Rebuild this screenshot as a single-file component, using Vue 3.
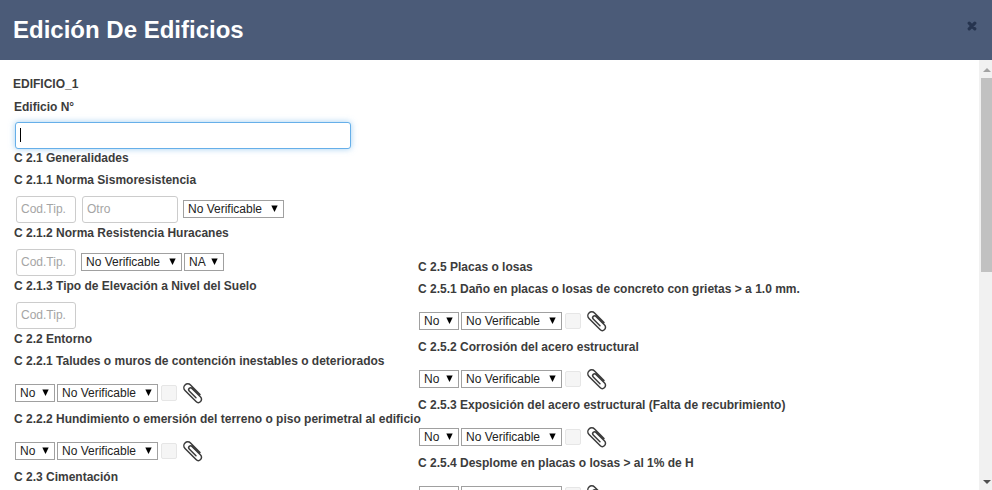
<script setup>
import { ref } from 'vue'

const number = ref('')

const check = (id, title) => ({
  id,
  title,
  tall: true,
  fields: [
    { kind: 'select', value: 'No', size: 'short' },
    { kind: 'select', value: 'No Verificable', size: 'long' },
    { kind: 'attachment' },
  ],
})

const code = { kind: 'text', placeholder: 'Cod.Tip.', size: 'code' }
const verifiable = { kind: 'select', value: 'No Verificable', size: 'long' }

const columns = [
  {
    name: 'left',
    items: [
      { id: 'c21', title: 'C 2.1 Generalidades' },
      {
        id: 'c211',
        title: 'C 2.1.1 Norma Sismoresistencia',
        fields: [code, { kind: 'text', placeholder: 'Otro', size: 'other' }, verifiable],
      },
      {
        id: 'c212',
        title: 'C 2.1.2 Norma Resistencia Huracanes',
        fields: [code, verifiable, { kind: 'select', value: 'NA', size: 'short' }],
      },
      { id: 'c213', title: 'C 2.1.3 Tipo de Elevación a Nivel del Suelo', fields: [code] },
      { id: 'c22', title: 'C 2.2 Entorno' },
      check('c221', 'C 2.2.1 Taludes o muros de contención inestables o deteriorados'),
      check('c222', 'C 2.2.2 Hundimiento o emersión del terreno o piso perimetral al edificio'),
      { id: 'c23', title: 'C 2.3 Cimentación' },
    ],
  },
  {
    name: 'right',
    items: [
      { id: 'c25', title: 'C 2.5 Placas o losas' },
      check('c251', 'C 2.5.1 Daño en placas o losas de concreto con grietas > a 1.0 mm.'),
      check('c252', 'C 2.5.2 Corrosión del acero estructural'),
      check('c253', 'C 2.5.3 Exposición del acero estructural (Falta de recubrimiento)'),
      check('c254', 'C 2.5.4 Desplome en placas o losas > al 1% de H'),
    ],
  },
]
</script>

<template>
  <div class="dialog">
    <header class="header">
      <h1>Edición De Edificios</h1>
      <button class="close" type="button" aria-label="Cerrar">
        <svg viewBox="0 0 10 10" width="10" height="10">
          <path d="M2.2 2.2 7.8 7.8M7.8 2.2 2.2 7.8" stroke="currentColor" stroke-width="3.2" stroke-linecap="round" />
        </svg>
      </button>
    </header>

    <div class="body">
      <form class="form" @submit.prevent>
        <p class="name">EDIFICIO_1</p>
        <div class="columns">
          <div v-for="column in columns" :key="column.name" class="column" :class="column.name">
            <template v-if="column.name === 'left'">
              <label class="title" for="number">Edificio N°</label>
              <div class="number">
                <input id="number" v-model="number" class="text" type="text" />
                <span class="caret"></span>
              </div>
            </template>

            <div v-for="item in column.items" :key="item.id">
              <component :is="item.fields ? 'label' : 'h2'" class="title" :for="item.fields ? item.id + '-0' : null">
                {{ item.title }}
              </component>
              <div v-if="item.fields" class="fields" :class="{ tall: item.tall }">
                <template v-for="(field, i) in item.fields" :key="i">
                  <input
                    v-if="field.kind === 'text'"
                    :id="item.id + '-' + i"
                    class="text"
                    :class="field.size"
                    type="text"
                    :placeholder="field.placeholder"
                  />
                  <span v-else-if="field.kind === 'select'" class="select" :class="field.size">
                    <select :id="item.id + '-' + i" :aria-label="item.title">
                      <option>{{ field.value }}</option>
                    </select>
                    <svg class="arrow" viewBox="0 0 7 7" width="7" height="7"><path d="M.3.5h6.4L3.5 7z" /></svg>
                  </span>
                  <template v-else>
                    <input class="box" type="checkbox" disabled :aria-label="item.title" />
                    <button class="attach" type="button" aria-label="Adjuntar">
                      <svg viewBox="-10 -10 20 20" width="20" height="20">
                        <path
                          transform="rotate(-45)"
                          d="M3.9 6V-7.4A3.9 3.9 0 0 0-3.9-7.4V8.2A3.2 3.2 0 0 0 2.5 8.2V-4A1.9 1.9 0 0 0-1.3-4V5.5"
                        />
                      </svg>
                    </button>
                  </template>
                </template>
              </div>
            </div>
          </div>
        </div>
      </form>

      <div class="scrollbar" aria-hidden="true">
        <svg class="up" viewBox="0 0 8 4" width="8" height="4"><path d="M4 0 8 4H0z" /></svg>
        <div class="track"><div class="thumb"></div></div>
        <svg class="down" viewBox="0 0 8 4" width="8" height="4"><path d="M0 0h8L4 4z" /></svg>
      </div>
    </div>
  </div>
</template>

<style>
body {
  margin: 0;
}
</style>

<style scoped>
.dialog {
  display: flex;
  flex-direction: column;
  height: 100vh;
  overflow: hidden;
  background: #fff;
  color: #3c3c3c;
  font: 12px "Liberation Sans", Arial, sans-serif;
}

.header {
  display: flex;
  flex: none;
  align-items: center;
  justify-content: space-between;
  height: 60px;
  padding: 0 15px 0 13px;
  box-sizing: border-box;
  background: #4b5b78;
}

h1 {
  margin: 0;
  color: #fff;
  font-size: 24px;
  line-height: 28px;
}

button {
  display: flex;
  padding: 0;
  border: 0;
  background: none;
}

.close {
  margin-bottom: 8px;
  color: #26344f;
}

.body {
  display: flex;
  flex: 1;
  min-height: 0;
}

.form {
  flex: 1;
  min-width: 0;
  padding: 13px 0 0 13px;
  overflow: hidden;
}

.name {
  margin: 0;
  font-weight: bold;
  line-height: 22px;
}

.columns {
  display: flex;
  gap: 2px;
  padding: 1px 0 0 1px;
}

.column {
  flex: none;
}

.left {
  width: 402px;
}

.right {
  padding-top: 160px;
}

.title {
  display: block;
  margin: 0;
  font-size: 12px;
  font-weight: bold;
  line-height: 22px;
  white-space: nowrap;
}

.number {
  position: relative;
  width: 336px;
  margin: 4px 0 -2px 1px;
}

.text {
  display: block;
  height: 27px;
  padding: 0 4px;
  box-sizing: border-box;
  border: 1px solid #ccc;
  border-radius: 3px;
  background: #fff;
  color: #333;
  font: inherit;
}

.text::placeholder {
  color: #a5a5a5;
}

.number .text {
  width: 100%;
  border-color: #66afe9;
  outline: 0;
  box-shadow: 0 0 6px rgba(102, 175, 233, 0.6);
}

.caret {
  position: absolute;
  top: 6px;
  left: 5px;
  width: 1px;
  height: 14px;
  background: #000;
}

.fields {
  display: flex;
  align-items: center;
  height: 26px;
  padding: 5px 0 0 2px;
}

.fields.tall {
  height: 30px;
  padding: 6px 0 0 1px;
}

.code {
  width: 60px;
  margin-right: 5px;
}

.other {
  width: 96px;
  margin: 0 5px 0 1px;
}

.select {
  position: relative;
  height: 18px;
  margin-right: 2px;
}

.select select {
  display: block;
  width: 100%;
  height: 100%;
  margin: 0;
  padding: 0 4px;
  box-sizing: border-box;
  border: 1px solid #a0a0a0;
  border-radius: 0;
  appearance: none;
  background: #fff;
  color: #222;
  font: inherit;
}

.short {
  width: 40px;
}

.long {
  width: 101px;
}

.arrow {
  position: absolute;
  top: 5px;
  right: 6px;
  fill: #000;
  pointer-events: none;
}

.box {
  width: 16px;
  height: 16px;
  margin: 0 6px 0 1px;
  border: 1px solid #e6e6e6;
  border-radius: 2px;
  appearance: none;
  background: #f5f5f5;
}

.attach svg {
  overflow: visible;
  fill: none;
  stroke: #3c3c3c;
  stroke-width: 1.5;
  stroke-linecap: round;
}

.scrollbar {
  display: flex;
  flex: none;
  flex-direction: column;
  align-items: flex-end;
  gap: 6px;
  width: 13px;
  padding: 8px 0 6px;
  box-sizing: border-box;
  background: #f1f1f1;
}

.up,
.down {
  flex: none;
  margin-right: 1px;
  fill: #a3a3a3;
}

.down {
  fill: #505050;
}

.track {
  flex: 1;
  width: 11px;
}

.thumb {
  height: 49%;
  background: #c1c1c1;
}
</style>
